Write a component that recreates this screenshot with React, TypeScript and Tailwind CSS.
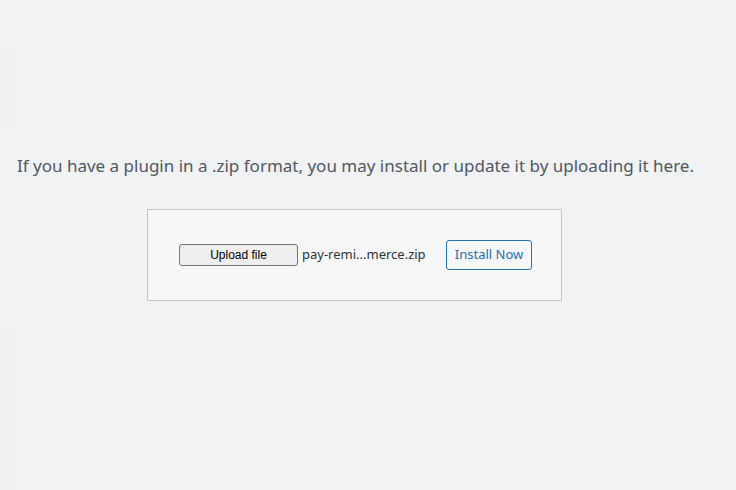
export default function App() {
  return (
    <div className="flex h-[490px] w-[736px] overflow-hidden bg-[#f1f2f4] font-['Noto_Sans',sans-serif]">
      {/* left edge strip */}
      <div className="flex w-4 flex-col">
        <div className="h-[46px]" />
        <div className="h-[80px] bg-[#f1f1f1]" />
        <div className="h-[204px]" />
        <div className="flex-1 bg-[#f1f1f1]" />
      </div>

      <div className="flex-1 pl-px pt-[154px]">
        <p className="text-[17px] leading-6 text-[#50575e]">
          If you have a plugin in a .zip format, you may install or update it by uploading it here.
        </p>

        <form className="ml-[130px] mt-[31px] flex w-[415px] items-center border border-[#c3c4c7] bg-[#f6f7f7] py-[30px] pl-[31px] pr-[29px]">
          <div className="flex items-center">
            <button
              type="button"
              className="h-[22px] w-[119px] rounded-[3px] border border-[#767676] bg-[#efefef] font-['Liberation_Sans',sans-serif] text-[12px] text-black"
            >
              Upload file
            </button>
            <span className="ml-[4px] text-[13px] text-[#2c3338]">pay-remi...merce.zip</span>
          </div>
          <button
            type="button"
            className="ml-auto h-[30px] w-[86px] rounded-[3px] border border-[#2271b1] bg-[#f6f7f7] text-[13px] text-[#2271b1]"
          >
            Install Now
          </button>
        </form>
      </div>
    </div>
  )
}
